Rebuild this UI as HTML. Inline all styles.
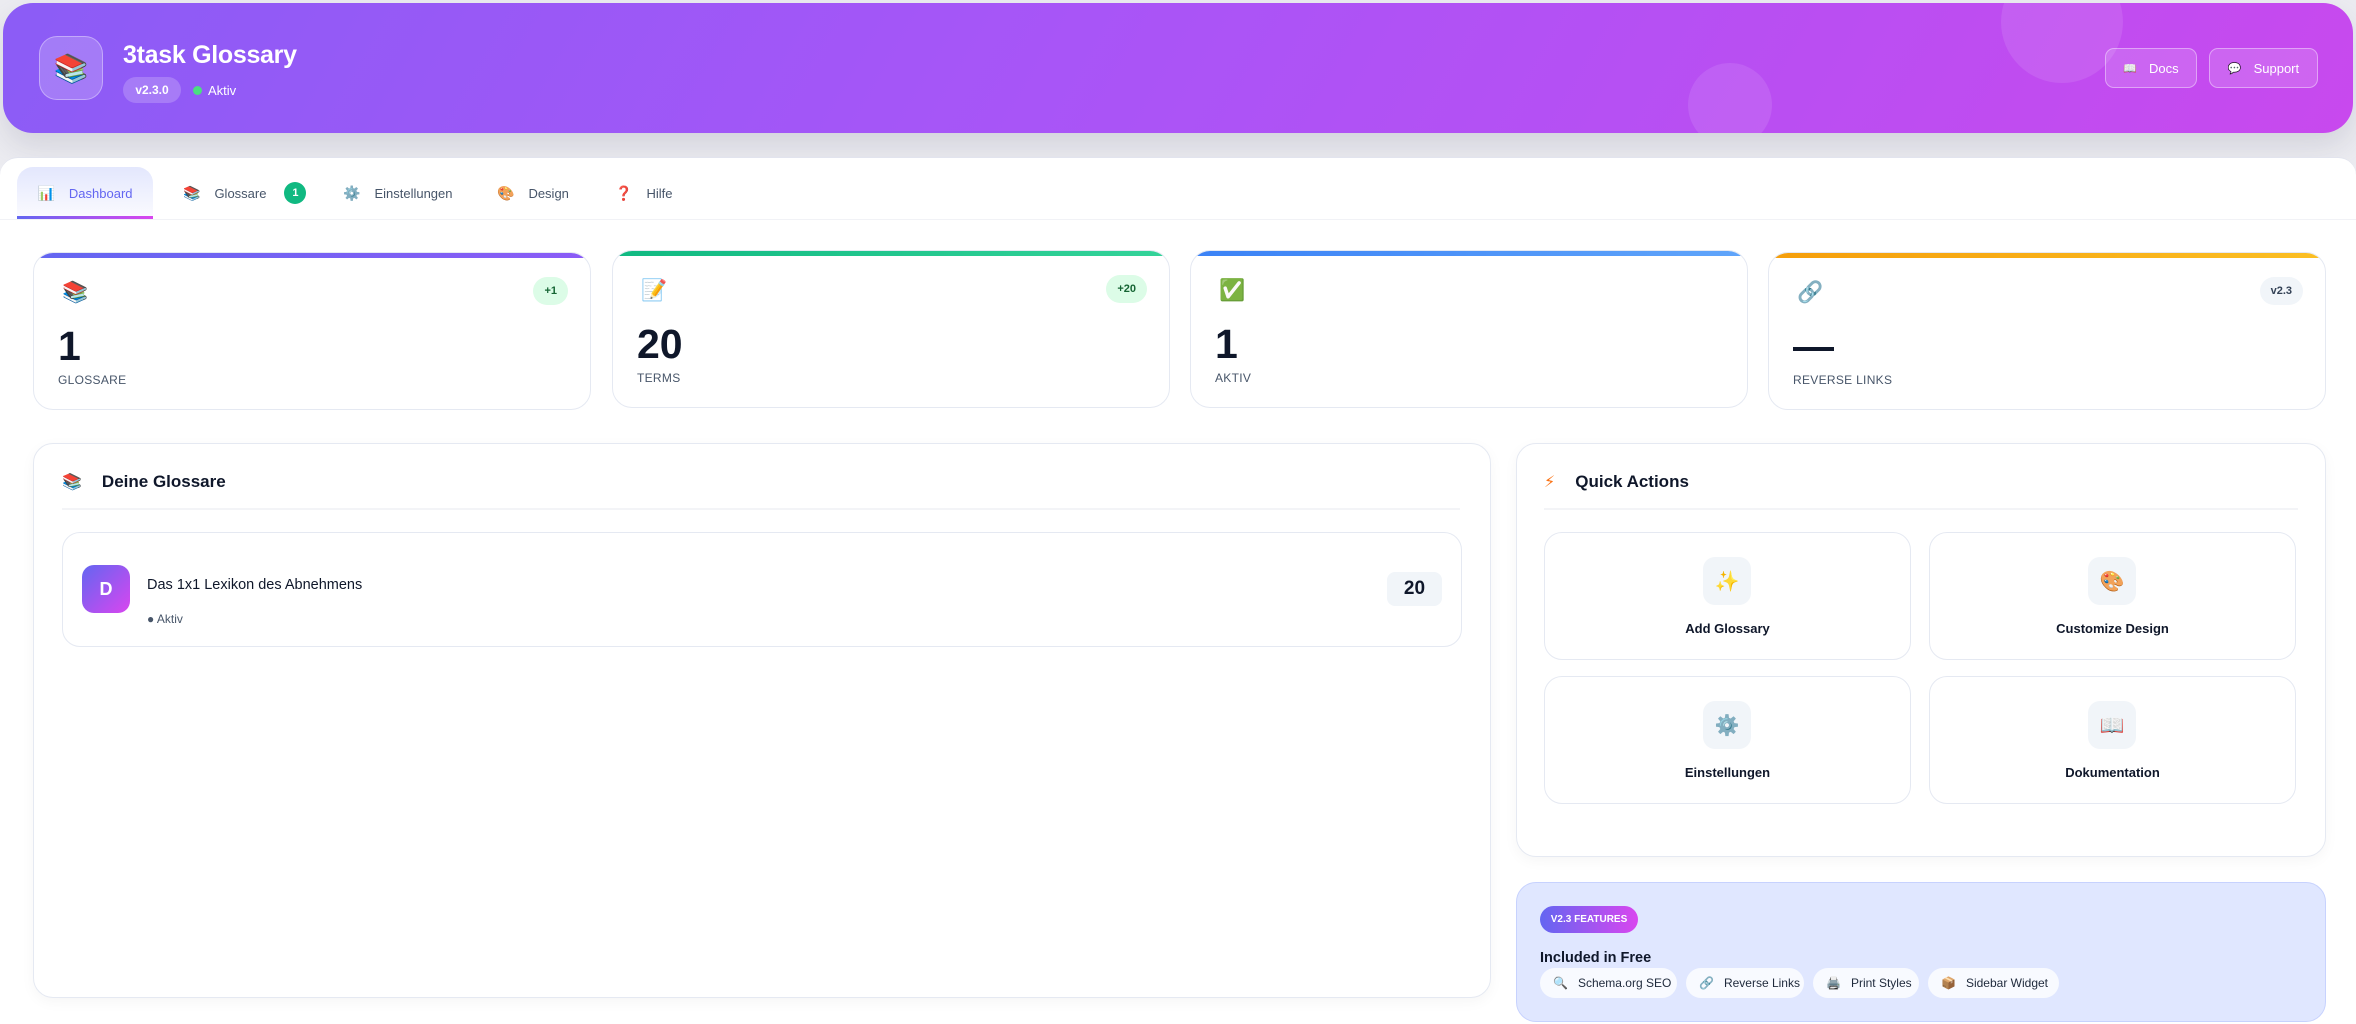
<!DOCTYPE html>
<html><head><meta charset="utf-8">
<style>
*{box-sizing:border-box;margin:0;padding:0}
html,body{width:2356px;height:1024px;overflow:hidden}
body{background:#ececf1;font-family:"Liberation Sans","DejaVu Sans",sans-serif;color:#0f172a;position:relative}
.abs{position:absolute}
.header{left:3px;top:3px;width:2350px;height:130px;border-radius:30px;background:linear-gradient(120deg,#8b5cf6 0%,#a855f7 45%,#c849ee 100%);overflow:hidden;box-shadow:0 14px 30px rgba(100,100,130,.18)}
.circ{position:absolute;border-radius:50%;background:rgba(255,255,255,.1)}
.logo{left:36px;top:33px;width:64px;height:64px;border-radius:18px;background:rgba(255,255,255,.2);border:1.5px solid rgba(255,255,255,.35);display:flex;align-items:center;justify-content:center;font-size:28px}
.title{left:120px;top:38px;color:#fff;font-weight:bold;font-size:25px;letter-spacing:-.3px}
.ver{left:120px;top:74px;height:26px;width:58px;border-radius:13px;background:rgba(255,255,255,.2);color:#fff;font-size:12px;font-weight:bold;display:flex;align-items:center;justify-content:center}
.akt{left:190px;top:74px;height:26px;color:#fff;font-size:13px;display:flex;align-items:center;gap:6px}
.akt i{width:9px;height:9px;border-radius:50%;background:#4ade80;display:inline-block}
.btn{top:45px;height:40px;border-radius:9px;border:1.5px solid rgba(255,255,255,.4);background:rgba(255,255,255,.15);color:#fff;font-size:13px;display:flex;align-items:center;justify-content:center;gap:12px}
.btn .e{font-size:11px}
.main{left:0;top:157px;width:2356px;height:880px;background:#fff;border-radius:18px 18px 0 0;border-top:1px solid #e2e4ee}
.tabline{left:0;top:219px;width:2356px;height:1px;background:#f1f2f6}
.tab{top:167px;height:52px;display:flex;align-items:center;font-size:13px;color:#475569;gap:14px}
.tab .e{font-size:14px}
.dash{left:17px;width:136px;border-radius:16px 16px 0 0;background:linear-gradient(180deg,#e3e7fd,#fbfbff);color:#6366f1;justify-content:center}
.dash:after{content:"";position:absolute;left:0;right:0;bottom:0;height:3px;background:linear-gradient(90deg,#6366f1,#d946ef)}
.badge1{width:22px;height:22px;border-radius:50%;background:#10b981;color:#fff;font-size:11px;font-weight:bold;display:flex;align-items:center;justify-content:center;margin-left:4px}
.card{background:#fff;border:1.5px solid #e5e9f2;border-radius:20px;overflow:hidden}
.stat{top:252px;height:158px}
.stat .bar{position:absolute;left:0;top:0;right:0;height:5px}
.stat .ic{position:absolute;left:28px;top:28px;font-size:21px}
.stat .num{position:absolute;left:24px;top:70px;font-size:41px;font-weight:bold;color:#0f172a}
.stat .lbl{position:absolute;left:24px;top:120px;font-size:12px;color:#475569;letter-spacing:.3px}
.stat .pill{position:absolute;right:22px;top:24px;height:28px;padding:0 11px;border-radius:14px;font-size:11px;font-weight:bold;display:flex;align-items:center}
.g{background:#dcfce7;color:#166534}
.hd{position:absolute;left:40px;top:28px;right:30px;height:38px;border-bottom:2px solid #f3f4f7;display:flex;align-items:flex-start;gap:20px;font-size:17px;font-weight:bold}
.hd .e{font-size:16px}
.qa{position:absolute;width:367px;height:128px;border:1.5px solid #e5e9f2;border-radius:18px;background:#fff}
.qa .ib{position:absolute;left:158px;top:24px;width:48px;height:48px;border-radius:12px;background:#f1f5f9;display:flex;align-items:center;justify-content:center;font-size:20px}
.qa .t{position:absolute;left:0;right:0;top:88px;text-align:center;font-size:13px;font-weight:bold;color:#0f172a}
.chip{position:absolute;top:968px;height:30px;border-radius:15px;background:#f8faff;font-size:12px;display:flex;align-items:center;gap:10px;padding:0 13px;color:#1e293b;white-space:nowrap}
.chip .e{font-size:12px}
</style></head><body>
<div class="abs header">
  <div class="circ" style="left:1998px;top:-42px;width:122px;height:122px"></div>
  <div class="circ" style="left:1685px;top:60px;width:84px;height:84px"></div>
  <div class="abs logo">📚</div>
  <div class="abs title">3task Glossary</div>
  <div class="abs ver">v2.3.0</div>
  <div class="abs akt"><i></i>Aktiv</div>
  <div class="abs btn" style="left:2102px;width:92px"><span class="e">📖</span>Docs</div>
  <div class="abs btn" style="left:2206px;width:109px"><span class="e">💬</span>Support</div>
</div>
<div class="abs main"></div>
<div class="abs tabline"></div>
<div class="abs tab dash"><span class="e">📊</span>Dashboard</div>
<div class="abs tab" style="left:183px"><span class="e">📚</span>Glossare<span class="badge1">1</span></div>
<div class="abs tab" style="left:343px"><span class="e">⚙️</span>Einstellungen</div>
<div class="abs tab" style="left:497px"><span class="e">🎨</span>Design</div>
<div class="abs tab" style="left:615px"><span class="e" style="color:#e11d48">❓</span>Hilfe</div>

<div class="abs card stat" style="left:33px;width:558px"><div class="bar" style="background:linear-gradient(90deg,#6366f1,#8b5cf6)"></div><div class="ic">📚</div><div class="num">1</div><div class="lbl">GLOSSARE</div><div class="pill g">+1</div></div>
<div class="abs card stat" style="left:612px;width:558px;top:250px"><div class="bar" style="background:linear-gradient(90deg,#10b981,#34d399)"></div><div class="ic">📝</div><div class="num">20</div><div class="lbl">TERMS</div><div class="pill g">+20</div></div>
<div class="abs card stat" style="left:1190px;width:558px;top:250px"><div class="bar" style="background:linear-gradient(90deg,#3b82f6,#60a5fa)"></div><div class="ic">✅</div><div class="num">1</div><div class="lbl">AKTIV</div></div>
<div class="abs card stat" style="left:1768px;width:558px"><div class="bar" style="background:linear-gradient(90deg,#f59e0b,#fbbf24)"></div><div class="ic">🔗</div><div class="num">—</div><div class="lbl">REVERSE LINKS</div><div class="pill" style="background:#f1f5f9;color:#334155">v2.3</div></div>

<div class="abs card" style="left:33px;top:443px;width:1458px;height:555px;box-shadow:0 4px 14px rgba(0,0,0,.04)">
  <div class="hd" style="left:28px"><span class="e">📚</span>Deine Glossare</div>
  <div class="abs" style="left:28px;top:88px;width:1400px;height:115px;border:1.5px solid #e5e9f2;border-radius:18px">
    <div class="abs" style="left:19px;top:32px;width:48px;height:48px;border-radius:12px;background:linear-gradient(135deg,#6366f1,#d946ef);color:#fff;font-weight:bold;font-size:18px;display:flex;align-items:center;justify-content:center">D</div>
    <div class="abs" style="left:84px;top:44px;font-size:14.5px;color:#0f172a">Das 1x1 Lexikon des Abnehmens</div>
    <div class="abs" style="left:84px;top:79px;font-size:12px;color:#475569">● Aktiv</div>
    <div class="abs" style="left:1324px;top:39px;width:55px;height:34px;border-radius:8px;background:#f1f5f9;font-weight:bold;font-size:19px;display:flex;align-items:center;justify-content:center">20</div>
  </div>
</div>

<div class="abs card" style="left:1516px;top:443px;width:810px;height:414px;box-shadow:0 4px 14px rgba(0,0,0,.04)">
  <div class="hd" style="left:27px;right:27px"><span class="e" style="color:#f97316">⚡</span>Quick Actions</div>
  <div class="qa" style="left:27px;top:88px"><div class="ib">✨</div><div class="t">Add Glossary</div></div>
  <div class="qa" style="left:412px;top:88px"><div class="ib">🎨</div><div class="t">Customize Design</div></div>
  <div class="qa" style="left:27px;top:232px"><div class="ib">⚙️</div><div class="t">Einstellungen</div></div>
  <div class="qa" style="left:412px;top:232px"><div class="ib">📖</div><div class="t">Dokumentation</div></div>
</div>

<div class="abs" style="left:1516px;top:882px;width:810px;height:140px;background:#e0e7ff;border:1.5px solid #c7d2fe;border-radius:20px"></div>
<div class="abs" style="left:1540px;top:906px;width:98px;height:27px;border-radius:14px;background:linear-gradient(90deg,#6366f1,#d946ef);color:#fff;font-size:10px;font-weight:bold;display:flex;align-items:center;justify-content:center">V2.3 FEATURES</div>
<div class="abs" style="left:1540px;top:950px;font-size:14.5px;font-weight:bold">Included in Free</div>
<div class="chip" style="left:1540px;width:137px"><span class="e">🔍</span>Schema.org SEO</div>
<div class="chip" style="left:1686px;width:118px"><span class="e">🔗</span>Reverse Links</div>
<div class="chip" style="left:1813px;width:106px"><span class="e">🖨️</span>Print Styles</div>
<div class="chip" style="left:1928px;width:131px"><span class="e">📦</span>Sidebar Widget</div>
</body></html>
